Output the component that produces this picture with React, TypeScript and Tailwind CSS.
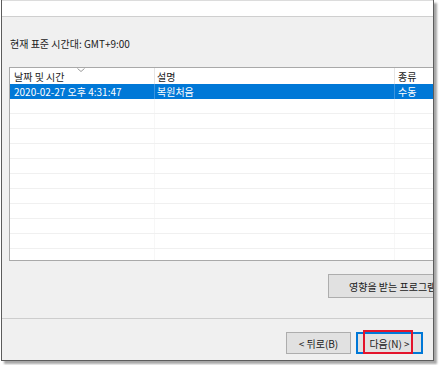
import React from "react";

const font = { fontFamily: '"Noto Sans CJK KR", "Noto Sans", sans-serif' };

function Row({ sel, cells }: { sel?: boolean; cells?: string[] }) {
  return (
    <div
      className={
        "flex h-[15px] shrink-0 " +
        (sel ? "bg-[#0078d7] text-white" : "border-b border-[#f0f0f0]")
      }
    >
      <div className="w-[144px] shrink-0 pl-[4px] flex items-center whitespace-nowrap">
        {cells ? cells[0] : ""}
      </div>
      <div
        className={
          "w-[240px] shrink-0 pl-[2px] flex items-center border-l whitespace-nowrap " +
          (sel ? "border-[#3c95de]" : "border-[#f7f7f7]")
        }
      >
        {cells ? cells[1] : ""}
      </div>
      <div
        className={
          "flex-1 pl-[3px] flex items-center border-l whitespace-nowrap " +
          (sel ? "border-[#3c95de]" : "border-[#f7f7f7]")
        }
      >
        {cells ? cells[2] : ""}
      </div>
    </div>
  );
}

export default function App() {
  const empty = Array.from({ length: 11 });
  return (
    <div className="w-[439px] h-[365px] bg-white relative overflow-hidden" style={font}>
      <div className="absolute left-[1px] top-0 w-[433px] h-[361px] border-l border-r border-b border-[#5c5c5c] shadow-[3px_3px_2px_rgba(0,0,0,0.35)] bg-[#f0f0f0] flex flex-col overflow-hidden text-[10px] leading-[15px] text-[#1a1a1a]">
        <div className="h-[17px] shrink-0 bg-white border-b border-[#cfcfcf] border-t border-t-[#dcdcdc]" />
        <div className="flex-1 flex flex-col overflow-hidden">
          <div className="pl-[8px] pt-[19px] h-[50px] shrink-0 whitespace-nowrap">현재 표준 시간대: GMT+9:00</div>
          <div className="ml-[7px] -mr-[2px] h-[194px] shrink-0 border border-[#a9a9a9] border-r-0 bg-white flex flex-col overflow-hidden">
            <div className="flex h-[16px] shrink-0 relative">
              <div className="w-[144px] shrink-0 pl-[4px] flex items-center">날짜 및 시간</div>
              <div className="w-[240px] shrink-0 pl-[2px] flex items-center border-l border-[#e5e5e5]">설명</div>
              <div className="flex-1 pl-[3px] flex items-center border-l border-[#e5e5e5]">종류</div>
              <svg className="absolute left-[67px] top-[0px]" width="8" height="5" viewBox="0 0 8 5">
                <path d="M0.5 0.5 L4 3.5 L7.5 0.5" fill="none" stroke="#9a9a9a" strokeWidth="1" />
              </svg>
            </div>
            <Row sel cells={["2020-02-27 오후 4:31:47", "복원처음", "수동"]} />
            {empty.map((_, i) => (
              <Row key={i} />
            ))}
          </div>
          <div className="flex justify-end mt-[13px] h-[24px] shrink-0">
            <div className="w-[118px] -mr-[13px] h-[24px] shrink-0 bg-[#e1e1e1] border border-[#adadad] pl-[20px] flex items-center whitespace-nowrap overflow-hidden text-[#1a1a1a]">
              영향을 받는 프로그램 검색
            </div>
          </div>
          <div className="mt-[20px] border-t border-[#cdcdcd] h-0 shrink-0" />
          <div className="flex justify-end gap-[5px] pr-[10px] mt-[13px] shrink-0">
            <div className="w-[65px] h-[22px] bg-[#e1e1e1] border border-[#adadad] text-[#1a1a1a] flex items-center justify-center whitespace-nowrap">
              &lt; 뒤로(B)
            </div>
            <div className="w-[67px] h-[22px] bg-[#e1e1e1] border-2 border-[#0078d7] text-[#1a1a1a] flex items-center justify-center whitespace-nowrap">
              다음(N) &gt;
            </div>
          </div>
        </div>
      </div>
      <div className="absolute left-[363px] top-[330px] w-[50px] h-[24px] border-2 border-[#e3142b]" />
    </div>
  );
}
